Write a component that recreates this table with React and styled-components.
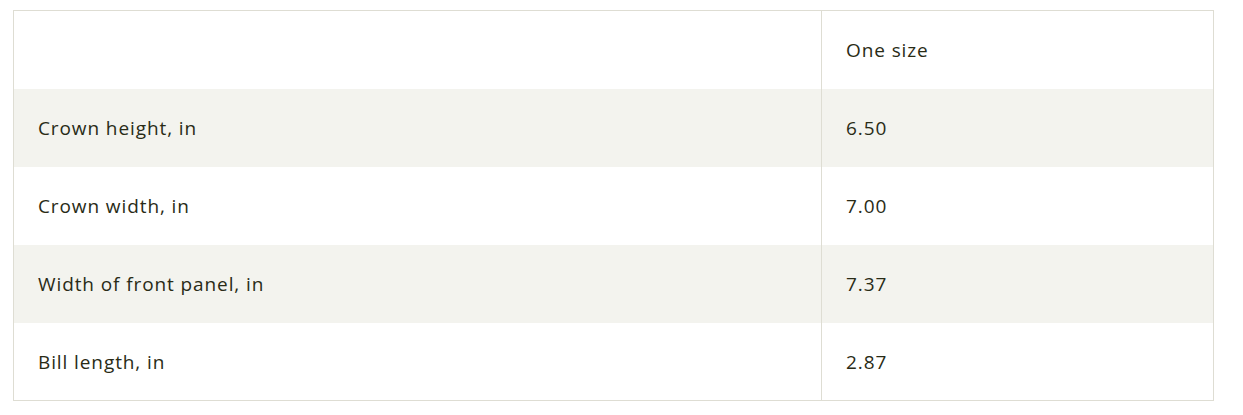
import React from 'react';
import styled, {createGlobalStyle} from 'styled-components';

const GlobalStyle = createGlobalStyle`
    html, body {
        margin: 0;
        padding: 0;
        background: #ffffff;
    }
    body {
        font-family: "Open Sans", "Liberation Sans", Arial, sans-serif;
    }
`;

const Wrapper = styled.div`
    padding: 10px 29px 0 13px;
`;

const SizeTable = styled.table`
    width: 1201px;
    border-collapse: collapse;
    border: 1px solid #deddd3;
    table-layout: fixed;
`;

const Row = styled.tr`
    background: ${props => (props.$striped ? '#f3f3ee' : '#ffffff')};
`;

const Cell = styled.td`
    height: 78px;
    padding: 1px 24px 0;
    box-sizing: border-box;
    font-size: 19px;
    letter-spacing: 0.9px;
    color: #292b16;
    vertical-align: middle;
    border-left: ${props => (props.$divided ? '1px solid #deddd3' : 'none')};
    width: ${props => props.$width || 'auto'};
`;

const rows = [
    {key: 'crown-height', label: 'Crown height, in', value: '6.50'},
    {key: 'crown-width', label: 'Crown width, in', value: '7.00'},
    {key: 'front-panel', label: 'Width of front panel, in', value: '7.37'},
    {key: 'bill-length', label: 'Bill length, in', value: '2.87'}
];

const App = () => (
    <Wrapper>
        <GlobalStyle />
        <SizeTable>
            <tbody>
                <Row>
                    <Cell $width="808px" />
                    <Cell $divided>One size</Cell>
                </Row>
                {rows.map((item, i) => (
                    <Row key={item.key} $striped={i % 2 === 0}>
                        <Cell>{item.label}</Cell>
                        <Cell $divided>{item.value}</Cell>
                    </Row>
                ))}
            </tbody>
        </SizeTable>
    </Wrapper>
);

export default App;
